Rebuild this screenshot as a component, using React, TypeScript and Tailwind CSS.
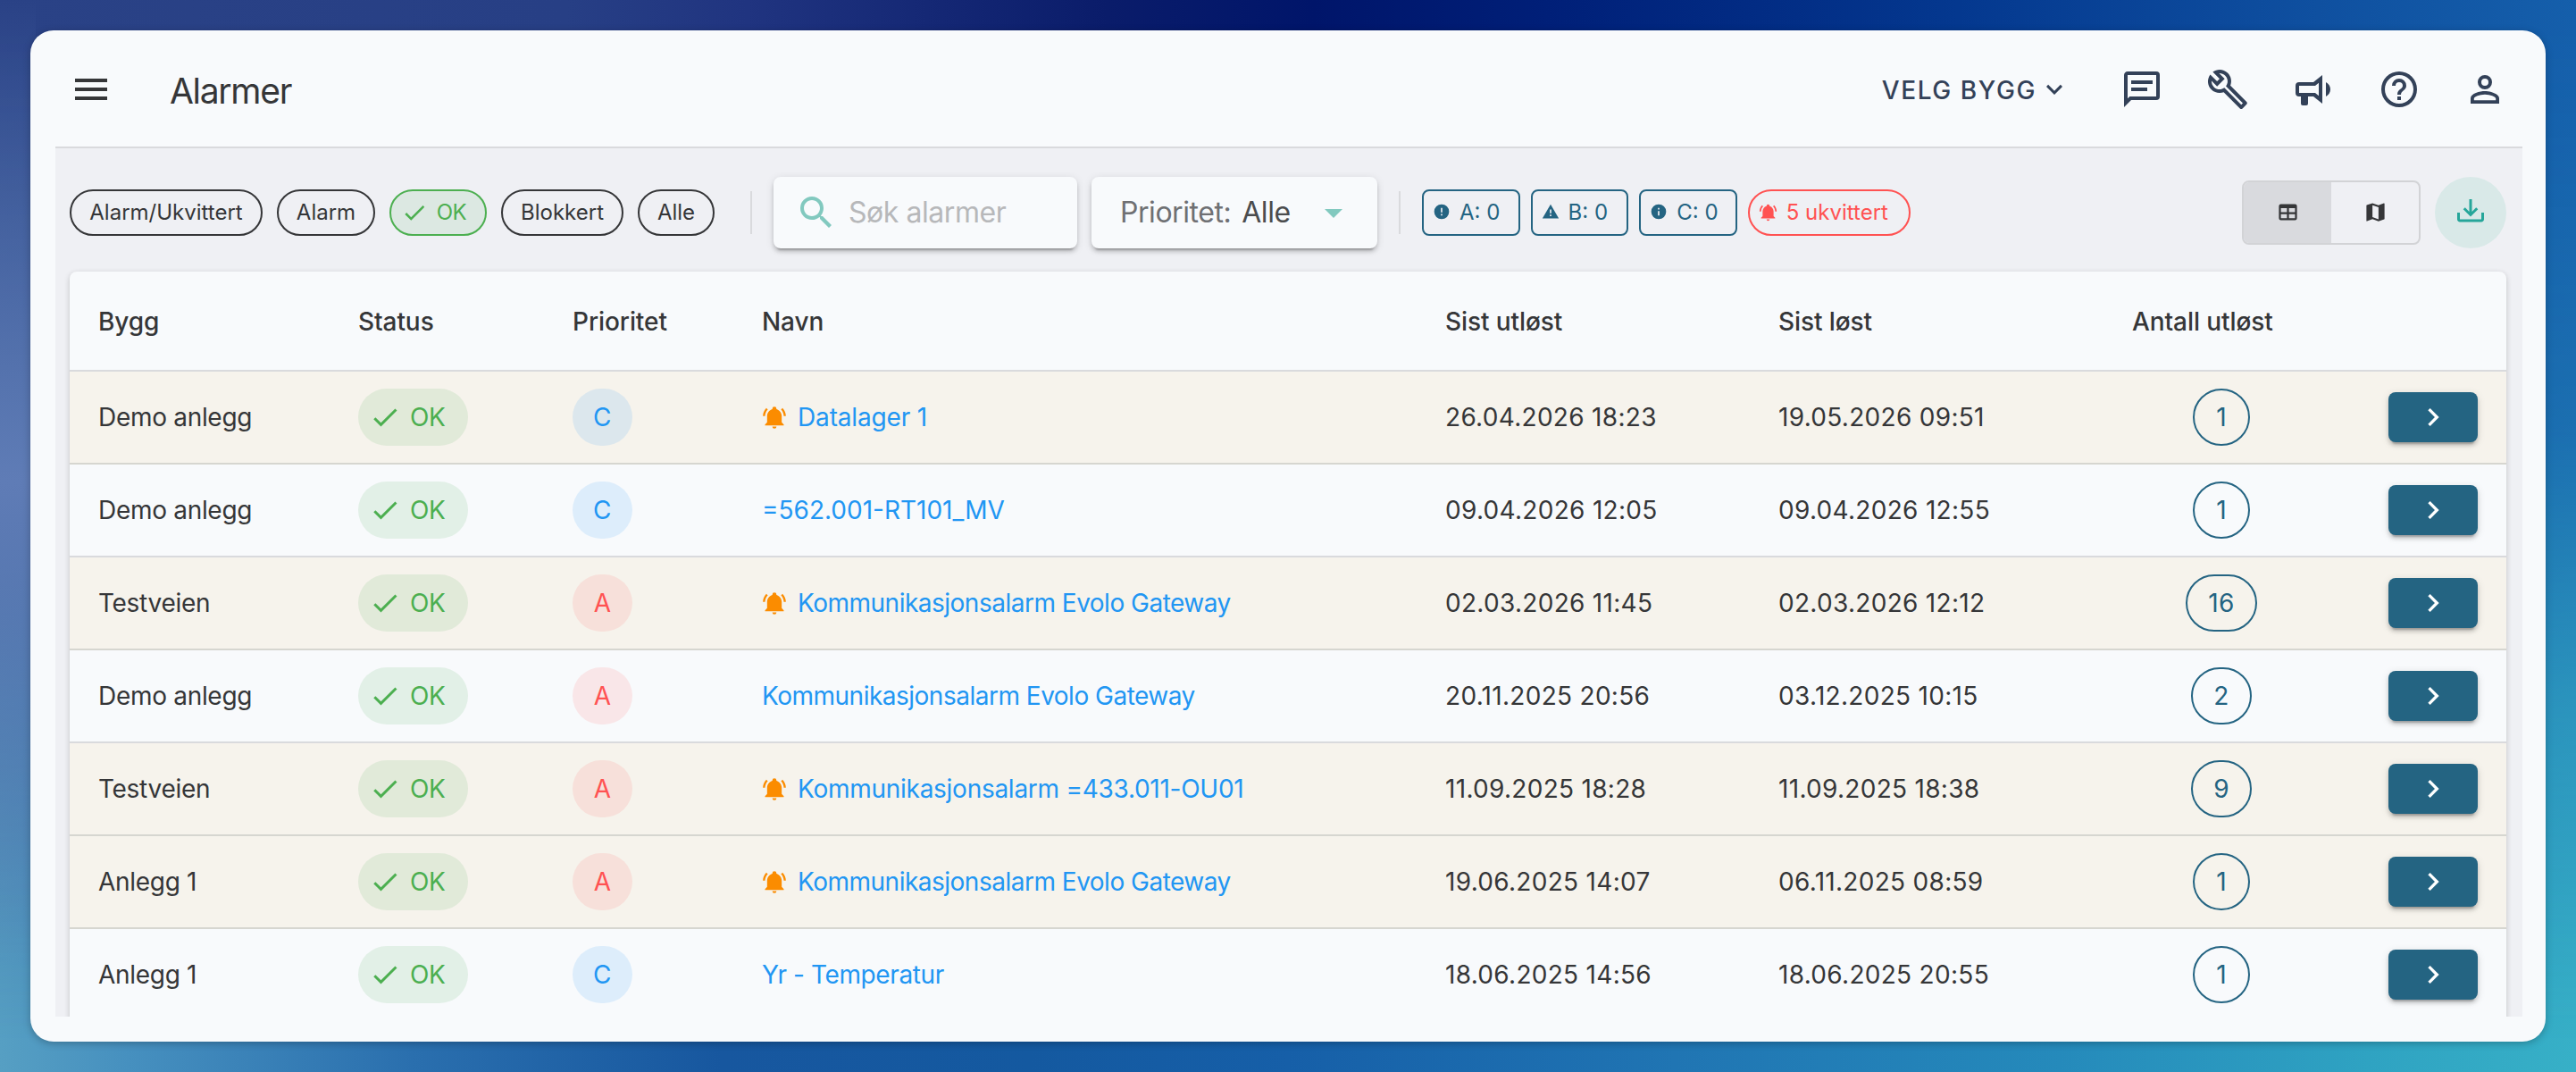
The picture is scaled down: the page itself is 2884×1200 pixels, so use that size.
import type { ReactNode } from 'react';

const icons = {
  menu: 'M3,6H21V8H3V6M3,11H21V13H3V11M3,16H21V18H3V16Z',
  check: 'M21,7L9,19L3.5,13.5L4.91,12.09L9,16.17L19.59,5.59L21,7Z',
  chevronDown: 'M7.41,8.58L12,13.17L16.59,8.58L18,10L12,16L6,10L7.41,8.58Z',
  chevronRight: 'M8.59,16.58L13.17,12L8.59,7.41L10,6L16,12L10,18L8.59,16.58Z',
  menuDown: 'M7,10L12,15L17,10H7Z',
  message:
    'M20,2A2,2 0 0,1 22,4V16A2,2 0 0,1 20,18H6L2,22V4C2,2.89 2.9,2 4,2H20M4,4V17.17L5.17,16H20V4H4M6,7H18V9H6V7M6,11H15V13H6V11Z',
  wrench:
    'M22.61,19L13.53,9.91C14.46,7.57 14,4.81 12.09,2.91C9.79,0.61 6.21,0.4 3.66,2.26L7.5,6.11L6.08,7.52L2.25,3.69C0.39,6.23 0.6,9.82 2.9,12.11C4.76,13.97 7.47,14.46 9.79,13.59L18.9,22.7C19.29,23.09 19.92,23.09 20.31,22.7L22.61,20.4C23,20 23,19.39 22.61,19M19.61,20.59L10.15,11.13C9.54,11.58 8.86,11.85 8.15,11.95C6.79,12.15 5.36,11.74 4.32,10.7C3.37,9.76 2.93,8.5 3,7.26L6.09,10.35L10.33,6.11L7.24,3C8.48,2.95 9.73,3.39 10.68,4.33C11.76,5.41 12.17,6.9 11.92,8.29C11.8,9 11.5,9.66 11.04,10.25L20.5,19.7L19.61,20.59Z',
  bullhorn:
    'M12,8H4A2,2 0 0,0 2,10V14A2,2 0 0,0 4,16H5V20A1,1 0 0,0 6,21H8A1,1 0 0,0 9,20V16H12L17,20V4L12,8M15,15.6L13,14H4V10H13L15,8.4V15.6M21.5,12C21.5,13.71 20.54,15.26 19,16V8C20.53,8.75 21.5,10.3 21.5,12Z',
  help: 'M11,18H13V16H11V18M12,2A10,10 0 0,0 2,12A10,10 0 0,0 12,22A10,10 0 0,0 22,12A10,10 0 0,0 12,2M12,20C7.59,20 4,16.41 4,12C4,7.59 7.59,4 12,4C16.41,4 20,7.59 20,12C20,16.41 16.41,20 12,20M12,6A4,4 0 0,0 8,10H10A2,2 0 0,1 12,8A2,2 0 0,1 14,10C14,12 11,11.75 11,15H13C13,12.75 16,12.5 16,10A4,4 0 0,0 12,6Z',
  account:
    'M12,4A4,4 0 0,1 16,8A4,4 0 0,1 12,12A4,4 0 0,1 8,8A4,4 0 0,1 12,4M12,6A2,2 0 0,0 10,8A2,2 0 0,0 12,10A2,2 0 0,0 14,8A2,2 0 0,0 12,6M12,13C14.67,13 20,14.33 20,17V20H4V17C4,14.33 9.33,13 12,13M12,14.9C9.03,14.9 5.9,16.36 5.9,17V18.1H18.1V17C18.1,16.36 14.97,14.9 12,14.9Z',
  magnify:
    'M9.5,3A6.5,6.5 0 0,1 16,9.5C16,11.11 15.41,12.59 14.44,13.73L14.71,14H15.5L20.5,19L19,20.5L14,15.5V14.71L13.73,14.44C12.59,15.41 11.11,16 9.5,16A6.5,6.5 0 0,1 3,9.5A6.5,6.5 0 0,1 9.5,3M9.5,5C7,5 5,7 5,9.5C5,12 7,14 9.5,14C12,14 14,12 14,9.5C14,7 12,5 9.5,5Z',
  alertCircle:
    'M13,13H11V7H13M13,17H11V15H13M12,2A10,10 0 0,0 2,12A10,10 0 0,0 12,22A10,10 0 0,0 22,12A10,10 0 0,0 12,2Z',
  alert: 'M13 14H11V9H13M13 18H11V16H13M1 21H23L12 2L1 21Z',
  info: 'M13,9H11V7H13M13,17H11V11H13M12,2A10,10 0 0,0 2,12A10,10 0 0,0 12,22A10,10 0 0,0 22,12A10,10 0 0,0 12,2Z',
  bellRing:
    'M21,19V20H3V19L5,17V11C5,7.9 7.03,5.17 10,4.29C10,4.19 10,4.1 10,4A2,2 0 0,1 12,2A2,2 0 0,1 14,4C14,4.1 14,4.19 14,4.29C16.97,5.17 19,7.9 19,11V17L21,19M14,21A2,2 0 0,1 12,23A2,2 0 0,1 10,21M19.75,3.19L18.33,4.61C20.04,6.3 21,8.6 21,11H23C23,8.07 21.84,5.25 19.75,3.19M1,11H3C3,8.6 3.96,6.3 5.67,4.61L4.25,3.19C2.16,5.25 1,8.07 1,11Z',
  table:
    'M5,4H19A2,2 0 0,1 21,6V18A2,2 0 0,1 19,20H5A2,2 0 0,1 3,18V6A2,2 0 0,1 5,4M5,8V12H11V8H5M13,8V12H19V8H13M5,14V18H11V14H5M13,14V18H19V14H13Z',
  map: 'M15,19L9,16.89V5L15,7.11M20.5,3C20.44,3 20.39,3 20.34,3L15,5.1L9,3L3.36,4.9C3.15,4.97 3,5.15 3,5.38V20.5A0.5,0.5 0 0,0 3.5,21C3.55,21 3.61,21 3.66,20.97L9,18.9L15,21L20.64,19.1C20.85,19 21,18.85 21,18.62V3.5A0.5,0.5 0 0,0 20.5,3Z',
  download:
    'M2 12H4V17H20V12H22V17C22 18.11 21.11 19 20 19H4C2.9 19 2 18.11 2 17V12M12 15L17.55 9.54L16.13 8.13L13 11.25V2H11V11.25L7.88 8.13L6.46 9.55L12 15Z',
};

function Icon({ name, className }: { name: keyof typeof icons; className: string }) {
  return (
    <svg viewBox="0 0 24 24" fill="currentColor" className={`shrink-0 ${className}`}>
      <path d={icons[name]} />
    </svg>
  );
}

const headerIcons = ['message', 'wrench', 'bullhorn', 'help', 'account'] as const;

const filters = [
  { label: 'Alarm/Ukvittert', width: 'w-[216px]' },
  { label: 'Alarm', width: 'w-[110px]' },
  { label: 'OK', width: 'w-[109px]', active: true },
  { label: 'Blokkert', width: 'w-[137px]' },
  { label: 'Alle', width: 'w-[86px]' },
];

const counters = [
  { label: 'A: 0', icon: 'alertCircle' },
  { label: 'B: 0', icon: 'alert' },
  { label: 'C: 0', icon: 'info' },
] as const;

type Alarm = {
  building: string;
  priority: 'A' | 'C';
  name: string;
  tracking?: string;
  unacked?: boolean;
  triggered: string;
  resolved: string;
  count: number;
};

const alarms: Alarm[] = [
  { building: 'Demo anlegg', priority: 'C', name: 'Datalager 1', tracking: 'tracking-[-0.15px]', unacked: true, triggered: '26.04.2026 18:23', resolved: '19.05.2026 09:51', count: 1 },
  { building: 'Demo anlegg', priority: 'C', name: '=562.001-RT101_MV', tracking: 'tracking-[0px]', triggered: '09.04.2026 12:05', resolved: '09.04.2026 12:55', count: 1 },
  { building: 'Testveien', priority: 'A', name: 'Kommunikasjonsalarm Evolo Gateway', unacked: true, triggered: '02.03.2026 11:45', resolved: '02.03.2026 12:12', count: 16 },
  { building: 'Demo anlegg', priority: 'A', name: 'Kommunikasjonsalarm Evolo Gateway', triggered: '20.11.2025 20:56', resolved: '03.12.2025 10:15', count: 2 },
  { building: 'Testveien', priority: 'A', name: 'Kommunikasjonsalarm =433.011-OU01', tracking: 'tracking-[-0.27px]', unacked: true, triggered: '11.09.2025 18:28', resolved: '11.09.2025 18:38', count: 9 },
  { building: 'Anlegg 1', priority: 'A', name: 'Kommunikasjonsalarm Evolo Gateway', unacked: true, triggered: '19.06.2025 14:07', resolved: '06.11.2025 08:59', count: 1 },
  { building: 'Anlegg 1', priority: 'C', name: 'Yr - Temperatur', tracking: 'tracking-[-0.4px]', triggered: '18.06.2025 14:56', resolved: '18.06.2025 20:55', count: 1 },
];

const columns = 'grid grid-cols-[291px_240px_212px_765px_373px_396px_1fr] pl-8';

function Header() {
  return (
    <header className="flex h-[104px] items-center border-b-2 border-[#d9dadd] pb-[26px] pl-4 pr-[18px]">
      <Icon name="menu" className="size-12 text-[#353638]" />
      <h1 className="ml-16 pt-0.5 text-[39px] leading-none tracking-[-1.3px] text-[#353638]">Alarmer</h1>
      <div className="ml-auto flex items-center text-[#334158]">
        <span className="pt-0.5 text-[28px] font-medium leading-none tracking-[1.6px]">VELG BYGG</span>
        <Icon name="chevronDown" className="ml-0.5 mr-14 size-9" />
        <div className="flex gap-12">
          {headerIcons.map((name) => (
            <Icon key={name} name={name} className="size-12" />
          ))}
        </div>
      </div>
    </header>
  );
}

function Divider() {
  return <div className="h-12 w-0.5 bg-[#d9dadd]" />;
}

function Field({ className, children }: { className: string; children: ReactNode }) {
  return (
    <div
      className={`flex h-20 items-center rounded-lg bg-[#f8fafc] text-[32px] tracking-[-0.45px] shadow-[0_6px_2px_-4px_rgba(0,0,0,0.2),0_4px_4px_rgba(0,0,0,0.14),0_2px_10px_rgba(0,0,0,0.12)] ${className}`}
    >
      {children}
    </div>
  );
}

function Toolbar() {
  return (
    <div className="flex h-[138px] items-center pl-4 pr-[18px] pt-1.5 text-2xl">
      <div className="flex gap-4">
        {filters.map((f) => (
          <button
            key={f.label}
            className={`flex h-[52px] items-center justify-center rounded-full border-2 ${f.width} ${
              f.active ? 'border-[#4caf50] bg-[#dce8e2] tracking-[-0.5px] text-[#4caf50]' : 'border-[#353638] text-[#353638]'
            }`}
          >
            {f.active && <Icon name="check" className="-ml-2.5 mr-2.5 size-[30px]" />}
            {f.label}
          </button>
        ))}
      </div>
      <div className="ml-10">
        <Divider />
      </div>
      <Field className="ml-6 w-[340px] pl-6">
        <Icon name="magnify" className="size-12 text-[#82c9bf]" />
        <span className="ml-3 text-[#b7b8ba]">Søk alarmer</span>
      </Field>
      <Field className="ml-4 w-80 pl-8 pr-[25px]">
        <span className="text-[#6f7073]">Prioritet:</span>
        <span className="ml-3 text-[#4b4c4e]">Alle</span>
        <Icon name="menuDown" className="ml-auto size-12 text-[#82c9bf]" />
      </Field>
      <div className="ml-6">
        <Divider />
      </div>
      <div className="ml-6 flex gap-3 text-[#246482]">
        {counters.map((c) => (
          <span key={c.label} className="flex h-[52px] w-[109.6px] items-center rounded-lg border-2 border-[#246482] pl-2.5">
            <Icon name={c.icon} className="mr-2.5 mt-[-2px] size-5" />
            {c.label}
          </span>
        ))}
        <span className="flex h-[52px] w-[182px] items-center rounded-full border-2 border-[#ff5252] pl-2.5 text-[#ff5252]">
          <Icon name="bellRing" className="mr-2.5 mt-[-2px] size-[21px]" />
          5 ukvittert
        </span>
      </div>
      <div className="ml-auto flex items-center gap-4">
        <div className="flex h-[72px] w-[200px] overflow-hidden rounded-lg border-2 border-[#d2d3d6] text-[#353638]">
          <button className="flex flex-1 items-center justify-center bg-[#d9dade] pb-0.5">
            <Icon name="table" className="size-[27px]" />
          </button>
          <button className="flex flex-1 items-center justify-center pb-0.5">
            <Icon name="map" className="size-[27px]" />
          </button>
        </div>
        <button className="flex size-20 items-center justify-center rounded-full bg-[#d9e9e8] text-[#26a69a]">
          <Icon name="download" className="size-9" />
        </button>
      </div>
    </div>
  );
}

function AlarmRow({ alarm }: { alarm: Alarm }) {
  return (
    <div
      className={`${columns} h-[104px] shrink-0 items-center border-b-2 ${
        alarm.unacked ? 'border-[#d6d6d0] bg-[#f6f3ec]' : 'border-[#d9dadd]'
      }`}
    >
      <div className="tracking-[-0.3px]">{alarm.building}</div>
      <div className="flex">
        <span className="flex h-16 w-[123px] items-center rounded-full bg-[#4caf50]/12 pl-3 tracking-[-0.3px] text-[#4caf50]">
          <Icon name="check" className="mr-2.5 size-9" />
          OK
        </span>
      </div>
      <div className="flex">
        <span
          className={`flex h-16 w-[67px] items-center justify-center rounded-full ${
            alarm.priority === 'A' ? 'bg-[#ff5252]/12 text-[#ff5252]' : 'bg-[#2196f3]/12 text-[#2196f3]'
          }`}
        >
          {alarm.priority}
        </span>
      </div>
      <a className={`flex items-center text-[#2196f3] ${alarm.tracking ?? 'tracking-[-0.5px]'}`}>
        {alarm.unacked && <Icon name="bellRing" className="mr-3 size-7 text-[#fb8c00]" />}
        {alarm.name}
      </a>
      <div>{alarm.triggered}</div>
      <div>{alarm.resolved}</div>
      <div className="flex items-center justify-between pr-8">
        <div className="flex w-[200px] justify-center">
          <span className="flex h-16 min-w-16 items-center justify-center rounded-full border-2 border-[#246482] px-[23px] text-[#246482]">
            {alarm.count}
          </span>
        </div>
        <button className="flex h-14 w-[100px] items-center justify-center rounded-lg bg-[#246482] text-white shadow-[0_6px_2px_-4px_rgba(0,0,0,0.2),0_4px_4px_rgba(0,0,0,0.14),0_2px_10px_rgba(0,0,0,0.12)]">
          <Icon name="chevronRight" className="size-10" />
        </button>
      </div>
    </div>
  );
}

function AlarmTable() {
  return (
    <div className="ml-4 mr-[18px] flex h-[900px] flex-col rounded-t-lg bg-[#f8fafc] text-[28px] tracking-[0.3px] text-[#353638] shadow-[0_2px_6px_rgba(0,0,0,0.2)]">
      <div className={`${columns} h-28 shrink-0 items-center border-b-2 border-[#d9dadd] pt-0.5 font-medium tracking-[-0.08px]`}>
        <div>Bygg</div>
        <div>Status</div>
        <div>Prioritet</div>
        <div>Navn</div>
        <div>Sist utløst</div>
        <div>Sist løst</div>
        <div>Antall utløst</div>
      </div>
      {alarms.map((alarm) => (
        <AlarmRow key={alarm.triggered} alarm={alarm} />
      ))}
    </div>
  );
}

// Wallpaper: a bright base, a dark layer that fades out downwards and a glow on the left edge
function Backdrop() {
  return (
    <>
      <div className="absolute inset-0 bg-[linear-gradient(to_right,#569fc3_0%,#4690bf_5%,#2a6fae_16%,#17579f_28%,#1459a0_40%,#165fa8_50%,#2075b3_65%,#258abb_80%,#2fa3c2_92%,#37b0c7_100%)]" />
      <div className="absolute inset-0 bg-[linear-gradient(to_right,#2a4286_0%,#273f85_22%,#203480_29%,#0a1c6a_43%,#00156a_51%,#001f78_60%,#04388f_76%,#0f50a0_90%,#155fab_100%)] [mask-image:linear-gradient(to_bottom,black_3%,rgba(0,0,0,0.8)_40%,rgba(0,0,0,0.35)_65%,transparent_97%)]" />
      <div className="absolute inset-y-0 left-0 w-10 bg-[linear-gradient(to_bottom,transparent_0%,#5f7cb6_45%,transparent_90%)]" />
    </>
  );
}

export default function App() {
  return (
    <div className="relative h-[1200px] w-[2884px] overflow-hidden p-[34px] font-[Inter,sans-serif]">
      <Backdrop />
      <div className="relative h-[1132px] rounded-[26px] bg-[#f8fafc] py-7 pl-7 pr-[26px] shadow-[0_2px_8px_rgba(0,0,0,0.25)]">
        <Header />
        <main className="h-[972px] overflow-hidden bg-[#eff0f4]">
          <Toolbar />
          <AlarmTable />
        </main>
      </div>
    </div>
  );
}
